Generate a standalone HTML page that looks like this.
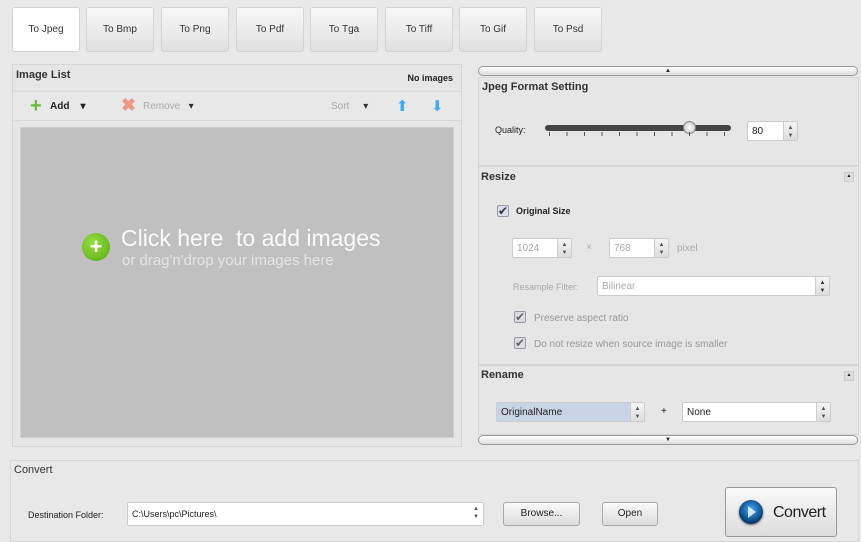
<!DOCTYPE html>
<html><head><meta charset="utf-8"><style>
*{box-sizing:border-box;margin:0;padding:0}
body{width:861px;height:540px;background:#e8e8e8;font-family:"Liberation Sans",sans-serif;font-size:10px;color:#222;position:relative;overflow:hidden}
.a{position:absolute}
.tab{position:absolute;top:7px;width:68px;height:45px;border:1px solid #d4d4d4;border-radius:3px;background:linear-gradient(#f8f8f8,#e0e0e0);text-align:center;line-height:44px;font-size:10px;color:#333}
.panel{position:absolute;border:1px solid #d6d6d6;background:#e6e6e6}
.hd{font-weight:bold;font-size:11px;color:#333}
.in{position:absolute;background:#fff;border:1px solid #ccc;border-radius:2px;font-size:10px;padding-left:4px;display:flex;align-items:center}
.spin{position:absolute;right:0;top:0;bottom:0;width:14px;background:linear-gradient(#f4f4f4,#ddd);border-left:1px solid #ccc;font-size:6px;text-align:center;line-height:8px;color:#555;padding-top:2px}
.btn{position:absolute;border:1px solid #aaa;border-radius:3px;background:linear-gradient(#fafafa,#dcdcdc);text-align:center;font-size:10px;color:#222}
.cb{position:absolute;width:12px;height:12px;border:1px solid #99a;border-radius:2px;background:#dde;font-size:12px;line-height:10px;text-align:center;color:#333}
.dis{color:#aaa}
</style></head><body>
<div class="tab" style="left:12px;background:#fff">To Jpeg</div>
<div class="tab" style="left:86px">To Bmp</div>
<div class="tab" style="left:161px">To Png</div>
<div class="tab" style="left:236px">To Pdf</div>
<div class="tab" style="left:310px">To Tga</div>
<div class="tab" style="left:385px">To Tiff</div>
<div class="tab" style="left:459px">To Gif</div>
<div class="tab" style="left:534px">To Psd</div>

<div class="panel" style="left:12px;top:64px;width:450px;height:383px">
 <div class="a hd" style="left:3px;top:4px">Image List</div>
 <div class="a" style="right:8px;top:8px;font-weight:bold;font-size:9px">No images</div>
 <div class="a" style="left:0;right:0;top:26px;height:30px;border-top:1px solid #d8d8d8;border-bottom:1px solid #d8d8d8;background:#e8e8e8"></div>
 <div class="a" style="left:17px;top:32px;color:#6b3;font-size:20px;font-weight:bold;line-height:18px">+</div>
 <div class="a" style="left:37px;top:36px;font-weight:bold">Add &nbsp;&nbsp;&nbsp;▾</div>
 <div class="a" style="left:108px;top:31px;color:#e98;font-size:18px;font-weight:bold;line-height:18px">✖</div>
 <div class="a dis" style="left:130px;top:36px">Remove &nbsp;&nbsp;<span style="color:#333">▾</span></div>
 <div class="a dis" style="left:318px;top:36px">Sort &nbsp;&nbsp;&nbsp;&nbsp;<span style="color:#333">▾</span></div>
 <div class="a" style="left:383px;top:32px;color:#4ae;font-size:15px">⬆</div>
 <div class="a" style="left:418px;top:32px;color:#4ae;font-size:15px">⬇</div>
 <div class="a" style="left:7px;top:62px;width:434px;height:311px;background:#c0c0c0;border:1px solid #d0d0d0"></div>
 <div class="a" style="left:69px;top:168px;width:28px;height:28px;border-radius:50%;background:radial-gradient(circle at 40% 35%,#9d4,#5a1);color:#fff;font-size:22px;font-weight:bold;text-align:center;line-height:27px">+</div>
 <div class="a" style="left:108px;top:160px;color:#fafafa;font-size:23px;white-space:nowrap">Click here&nbsp; to add images</div>
 <div class="a" style="left:109px;top:187px;color:#e4e4e4;font-size:15px;white-space:nowrap">or drag'n'drop your images here</div>
</div>

<div class="a" style="left:478px;top:66px;width:380px;height:10px;border:1px solid #999;border-radius:5px;background:linear-gradient(#fff,#ddd);font-size:6px;text-align:center;line-height:8px">▲</div>
<div class="panel" style="left:478px;top:77px;width:381px;height:89px">
 <div class="a hd" style="left:3px;top:3px">Jpeg Format Setting</div>
 <div class="a" style="left:16px;top:47px;font-size:9px">Quality:</div>
 <div class="a" style="left:66px;top:47px;width:186px;height:6px;border-radius:3px;background:#444"></div>
 <div class="a" style="left:204px;top:43px;width:13px;height:13px;border-radius:50%;background:radial-gradient(#fff,#bbb);border:1px solid #888"></div>
 <div class="a" style="left:70px;top:54px;width:180px;height:4px;background:repeating-linear-gradient(90deg,#555 0 1px,transparent 1px 17.5px)"></div>
 <div class="in" style="left:268px;top:43px;width:51px;height:20px">80<div class="spin">▲<br>▼</div></div>
</div>
<div class="panel" style="left:478px;top:166px;width:381px;height:199px">
 <div class="a" style="left:2px;top:4px;font-size:11px;font-weight:bold;color:#333">Resize</div>
 <div class="a" style="right:4px;top:5px;width:10px;height:10px;background:#ddd;border:1px solid #ccc;font-size:5px;text-align:center">▲</div>
 <div class="cb" style="left:18px;top:38px">✔</div>
 <div class="a" style="left:37px;top:39px;font-size:9px;font-weight:bold">Original Size</div>
 <div class="in dis" style="left:33px;top:71px;width:60px;height:20px">1024<div class="spin">▲<br>▼</div></div>
 <div class="a dis" style="left:107px;top:75px">×</div>
 <div class="in dis" style="left:130px;top:71px;width:60px;height:20px">768<div class="spin">▲<br>▼</div></div>
 <div class="a dis" style="left:198px;top:76px">pixel</div>
 <div class="a dis" style="left:34px;top:115px;font-size:9px">Resample Filter:</div>
 <div class="in dis" style="left:118px;top:109px;width:233px;height:20px">Bilinear<div class="spin" style="color:#333">▲<br>▼</div></div>
 <div class="cb" style="left:35px;top:144px;color:#666;background:#ddd">✔</div>
 <div class="a dis" style="left:55px;top:146px;color:#999">Preserve aspect ratio</div>
 <div class="cb" style="left:35px;top:170px;color:#666;background:#ddd">✔</div>
 <div class="a dis" style="left:55px;top:172px;color:#999">Do not resize when source image is smaller</div>
</div>
<div class="panel" style="left:478px;top:365px;width:381px;height:70px">
 <div class="a" style="left:2px;top:3px;font-size:11px;font-weight:bold;color:#333">Rename</div>
 <div class="a" style="right:4px;top:5px;width:10px;height:10px;background:#ddd;border:1px solid #ccc;font-size:5px;text-align:center">▲</div>
 <div class="in" style="left:17px;top:36px;width:149px;height:20px;background:#c8d4e4">OriginalName<div class="spin">▲<br>▼</div></div>
 <div class="a" style="left:182px;top:40px">+</div>
 <div class="in" style="left:203px;top:36px;width:149px;height:20px">None<div class="spin">▲<br>▼</div></div>
</div>
<div class="a" style="left:478px;top:435px;width:380px;height:10px;border:1px solid #999;border-radius:5px;background:linear-gradient(#fff,#ddd);font-size:6px;text-align:center;line-height:8px">▼</div>

<div class="panel" style="left:10px;top:460px;width:849px;height:82px;background:#e8e8e8">
 <div class="a" style="left:3px;top:3px;font-size:11px;color:#333">Convert</div>
 <div class="a" style="left:17px;top:49px;font-size:9px">Destination Folder:</div>
 <div class="in" style="left:116px;top:41px;width:357px;height:24px;font-size:9px">C:\Users\pc\Pictures\<div class="spin" style="background:#fff;border:none">▲<br>▼</div></div>
 <div class="btn" style="left:492px;top:41px;width:77px;height:24px;line-height:22px">Browse...</div>
 <div class="btn" style="left:591px;top:41px;width:56px;height:24px;line-height:22px">Open</div>
 <div class="btn" style="left:714px;top:26px;width:112px;height:50px;border-color:#999"></div>
 <div class="a" style="left:728px;top:39px;width:24px;height:24px;border-radius:50%;background:radial-gradient(circle at 50% 40%,#4af,#036 75%,#012);box-shadow:0 1px 2px #666"></div>
 <div class="a" style="left:737px;top:45px;width:0;height:0;border-left:8px solid #fff;border-top:6px solid transparent;border-bottom:6px solid transparent;opacity:.8"></div>
 <div class="a" style="left:762px;top:43px;font-size:16px;color:#222;letter-spacing:-0.5px">Convert</div>
</div>
</body></html>
